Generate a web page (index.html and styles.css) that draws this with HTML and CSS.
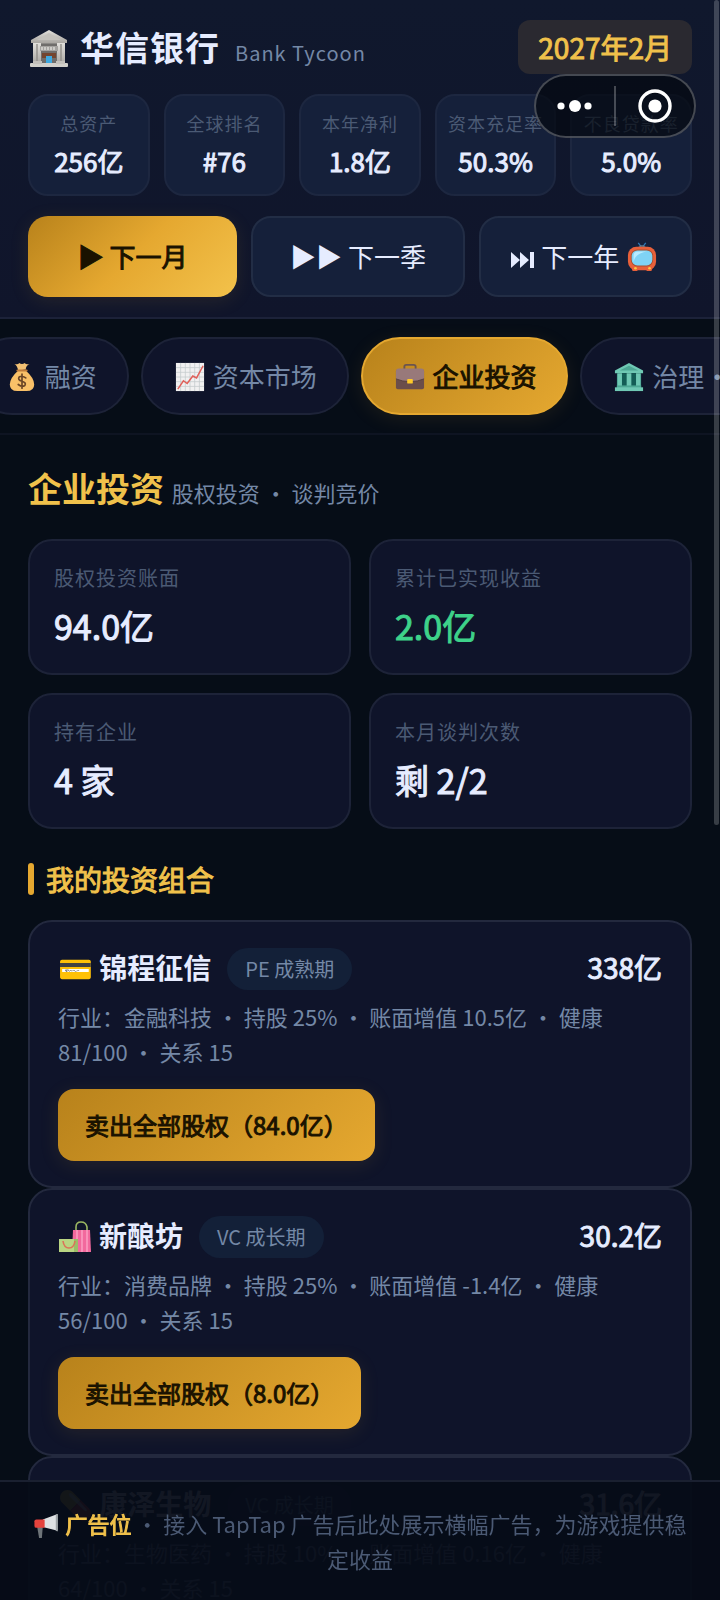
FILE: index.html
```
<!DOCTYPE html>
<html lang="zh-CN">
  <head>
    <meta charset="UTF-8" />
    <meta name="viewport" content="width=device-width, initial-scale=1.0" />
    <title>华信银行 Bank Tycoon</title>
    <link rel="stylesheet" href="styles.css">
  </head>
  <body>
    <header class="header">
      <div class="brand-row">
        <svg class="brand-icon" viewBox="0 0 40 40">
          <defs>
            <linearGradient id="stone" x1="0" y1="0" x2="0" y2="1">
              <stop offset="0" stop-color="#e2e0dc" /><stop offset="1" stop-color="#a9a6a1" />
            </linearGradient>
          </defs>
          <rect x="5" y="13" width="30" height="22" fill="#8b8986" />
          <rect x="12" y="15" width="16" height="20" fill="#6f6d6b" />
          <path d="M20 1 38 11v3H2v-3z" fill="url(#stone)" />
          <path d="M20 4 32 11H8z" fill="#c4c1bc" />
          <rect x="4" y="14" width="8" height="21" fill="url(#stone)" />
          <rect x="28" y="14" width="8" height="21" fill="url(#stone)" />
          <path d="M8 15v19M32 15v19" stroke="#918e89" stroke-width="1.4" />
          <rect x="11" y="17" width="18" height="5" fill="#a5a3a0" />
          <path d="M13 18v3M16 18v3M19 18v3M22 18v3M25 18v3" stroke="#dedcd8" stroke-width="1.4" />
          <rect x="13" y="24" width="14" height="5" fill="#74452f" />
          <rect x="17" y="27" width="6" height="8" fill="#3fa9e0" />
          <rect x="1" y="34" width="38" height="4" rx="1" fill="#d2d0cb" />
          <rect x="4" y="32" width="9" height="3" fill="#c4c1bc" /><rect x="27" y="32" width="9" height="3" fill="#c4c1bc" />
        </svg>
        <h1 class="brand">华信银行</h1>
        <span class="brand-sub">Bank Tycoon</span>
        <span class="date">2027年2月</span>
      </div>
      <div class="stats">
        <div class="stat"><span class="stat-label">总资产</span><span class="stat-value">256亿</span></div>
        <div class="stat"><span class="stat-label">全球排名</span><span class="stat-value">#76</span></div>
        <div class="stat"><span class="stat-label">本年净利</span><span class="stat-value">1.8亿</span></div>
        <div class="stat"><span class="stat-label">资本充足率</span><span class="stat-value">50.3%</span></div>
        <div class="stat"><span class="stat-label">不良贷款率</span><span class="stat-value">5.0%</span></div>
      </div>
      <div class="actions">
        <button class="action action-primary" type="button">▶ 下一月</button>
        <button class="action" type="button">▶▶ 下一季</button>
        <button class="action" type="button">
          <svg class="skip-icon" viewBox="0 0 24 18" fill="currentColor"><path d="M0 1l9 8-9 8zM9 1l9 8-9 8zM19 1h4v16h-4z" /></svg>
          下一年
          <svg class="icon" viewBox="0 0 32 32">
            <path d="M12 1l3 4M20 1l-3 4" stroke="#2f78b5" stroke-width="1.4" />
            <path d="M12 5q4-3 8 0z" fill="#6a7f8c" />
            <path d="M4 26h8l-1 5H6zM20 26h8l-2 5h-5z" fill="#e8603a" />
            <rect x="1" y="5" width="30" height="25" rx="9" fill="#e8603a" />
            <rect x="4" y="8" width="24" height="18" rx="7" fill="#a9512f" />
            <rect x="5" y="9" width="22" height="16" rx="6" fill="#7fd3f5" />
            <path d="M7 21V14q0-4 5-4h9q-12 2-14 11z" fill="#b8ecff" />
            <circle cx="9" cy="28" r="1.4" fill="#ffc640" /><circle cx="24" cy="28" r="1.4" fill="#ffc640" />
          </svg>
        </button>
      </div>
    </header>

    <nav class="tabs">
      <button class="tab" type="button">
        <svg class="icon" viewBox="0 0 32 32">
          <path d="M12 9Q11 4 8 2q4 1 5-1 3 2 6 0 1 2 5 1-4 2-4 6z" fill="#f3c173" />
          <path d="M12 9h8q9 8 9 15 0 7-8 7H11q-8 0-8-7 0-7 9-15z" fill="#f9c068" />
          <path d="M11 9h10" stroke="#c07c3a" stroke-width="2" stroke-linecap="round" />
          <path d="M20 17q-4-3-7-1-2 3 3 4.500 5 1.500 3 4.500-3 2-7-1M16 13v15" fill="none" stroke="#6b4526" stroke-width="1.8" stroke-linecap="round" />
        </svg>
        融资
      </button>
      <button class="tab" type="button">
        <svg class="icon" viewBox="0 0 32 32">
          <rect x="1" y="1" width="30" height="30" fill="#f1f1f1" />
          <path d="M6 1v30M11 1v30M16 1v30M21 1v30M26 1v30M1 6h30M1 11h30M1 16h30M1 21h30M1 26h30" stroke="#c3c9cb" stroke-width=".8" />
          <path d="M3 29l6-9 4 3 6-8 4 2 7-13" fill="none" stroke="#e0605a" stroke-width="1.6" />
        </svg>
        资本市场
      </button>
      <button class="tab active" type="button">
        <svg class="icon" viewBox="0 0 32 32">
          <path d="M10 8V5q0-2 2-2h8q2 0 2 2v3" fill="none" stroke="#6b5450" stroke-width="2" />
          <rect x="1" y="8" width="30" height="21" rx="2" fill="#6b4e4a" />
          <path d="M1 18V10q0-3 3-3h24q3 0 3 3v8q-7 3-15 3t-15-3z" fill="#98797a" />
          <path d="M1 18q7 3 15 3t15-3" fill="none" stroke="#55403d" />
          <rect x="13" y="18" width="6" height="5" rx="1" fill="#ffc928" />
        </svg>
        企业投资
      </button>
      <button class="tab" type="button">
        <svg class="icon" viewBox="0 0 32 32">
          <path d="M16 1 31 9v3H1V9z" fill="#6fc9b4" />
          <path d="M16 4 26 9H6z" fill="#4da894" />
          <rect x="3" y="12" width="26" height="15" fill="#145e56" />
          <path d="M6 12v15M16 12v15M26 12v15" stroke="#6fc9b4" stroke-width="5" />
          <rect x="3" y="25" width="26" height="3" fill="#4da894" />
          <rect x="1" y="27" width="30" height="4" fill="#6fc9b4" />
        </svg>
        治理·
      </button>
    </nav>

    <main class="content">
      <h2 class="page-title">企业投资 <small>股权投资 ・ 谈判竞价</small></h2>
      <div class="cards">
        <div class="card"><div class="card-label">股权投资账面</div><div class="card-value">94.0亿</div></div>
        <div class="card"><div class="card-label">累计已实现收益</div><div class="card-value green">2.0亿</div></div>
        <div class="card"><div class="card-label">持有企业</div><div class="card-value">4 家</div></div>
        <div class="card"><div class="card-label">本月谈判次数</div><div class="card-value">剩 2/2</div></div>
      </div>

      <h3 class="section-title">我的投资组合</h3>
      <article class="holding">
        <div class="holding-head">
          <h4>💳 锦程征信</h4>
          <span class="tag">PE 成熟期</span>
          <strong class="worth">338亿</strong>
        </div>
        <p>行业：金融科技 ・ 持股 25% ・ 账面增值 10.5亿 ・ 健康 81/100 ・ 关系 15</p>
        <button class="sell" type="button">卖出全部股权（84.0亿）</button>
      </article>
      <article class="holding">
        <div class="holding-head">
          <svg class="bags-icon" viewBox="0 0 32 32">
            <path d="M17 10V6q0-5 5-5t6 5v4" fill="none" stroke="#9cb862" stroke-width="1.6" />
            <path d="M14 9h17l1 22H13z" fill="#f2699d" />
            <path d="M18 9v22M23 9v22M28 9v22" stroke="#fa9cc0" stroke-width="1.6" />
            <rect x="0" y="18" width="19" height="13" fill="#b9d582" />
            <path d="M15 18h4v13h-4z" fill="#9cbc68" />
            <path d="M4 20q1 7 6 7t6-7" fill="none" stroke="#dc7358" stroke-width="1.6" />
          </svg>
          <h4>新酿坊</h4>
          <span class="tag">VC 成长期</span>
          <strong class="worth">30.2亿</strong>
        </div>
        <p>行业：消费品牌 ・ 持股 25% ・ 账面增值 -1.4亿 ・ 健康 56/100 ・ 关系 15</p>
        <button class="sell" type="button">卖出全部股权（8.0亿）</button>
      </article>
      <article class="holding">
        <div class="holding-head">
          <h4>💊 康泽生物</h4>
          <span class="tag">VC 成长期</span>
          <strong class="worth">31.6亿</strong>
        </div>
        <p>行业：生物医药 ・ 持股 10% ・ 账面增值 0.16亿 ・ 健康 64/100 ・ 关系 15</p>
      </article>
    </main>

    <footer class="ad-bar">
      <svg class="ad-icon" viewBox="0 0 28 28">
        <path d="M4 15h6l-1 12H6z" fill="#6d7478" />
        <path d="M10 7 26 1v18l-16-4z" fill="#dfe2e4" />
        <path d="M24 2v17l2 1V1z" fill="#9da3a6" />
        <path d="M3 7h9v9H3q-2 0-2-2V9q0-2 2-2z" fill="#e5433d" />
      </svg>
      <strong>广告位</strong> ・ 接入 TapTap 广告后此处展示横幅广告，为游戏提供稳定收益
    </footer>

    <div class="capsule">
      <button type="button" aria-label="菜单">
        <svg width="36" height="14" viewBox="0 0 36 14" fill="#fff">
          <circle cx="4" cy="7" r="3.6" /><circle cx="18" cy="7" r="6" /><circle cx="31" cy="7" r="3.6" />
        </svg>
      </button>
      <span class="capsule-line"></span>
      <button type="button" aria-label="关闭">
        <svg width="34" height="34" viewBox="0 0 34 34">
          <circle cx="17" cy="17" r="15" fill="none" stroke="#fff" stroke-width="3.4" />
          <circle cx="17" cy="17" r="6.6" fill="#fff" />
        </svg>
      </button>
    </div>
    <div class="scroll-thumb"></div>

    <script>
      document.querySelector(".tabs").scrollLeft = 55;
    </script>
  </body>
</html>
```

FILE: styles.css
```
* {
  margin: 0;
  padding: 0;
  box-sizing: border-box;
}
body {
  background: #060d17;
  color: #e6ecff;
  font-family: "Noto Sans CJK SC", "Noto Color Emoji", sans-serif;
  height: 100vh;
  overflow: hidden;
}
button {
  font-family: inherit;
  border: none;
  cursor: pointer;
}
.header {
  padding: 20px 28px;
  background: linear-gradient(180deg, #10182d, #10152b);
  border-bottom: 2px solid #1c2239;
}
.brand-row {
  display: flex;
  align-items: center;
  height: 54px;
}
.brand-icon {
  width: 42px;
  height: 40px;
  margin: 4px 10px 0 0;
}
.brand {
  padding-bottom: 2px;
  font-size: 34px;
  letter-spacing: 1px;
  font-weight: 700;
}
.brand-sub {
  margin-left: 15px;
  padding-top: 10px;
  font-size: 20px;
  letter-spacing: 1px;
  color: #7488a6;
}
.date,
.stat-value,
.action-primary,
.tab.active,
.card-value,
.section-title,
.worth,
.sell,
.ad-bar strong {
  font-weight: 400;
  -webkit-text-stroke: 1px currentColor;
}
.date {
  margin-left: auto;
  padding: 0 20px;
  line-height: 54px;
  border-radius: 12px;
  background: #2a2930;
  color: #f0c14b;
  font-size: 28px;
}
.stats {
  display: grid;
  grid-template-columns: repeat(5, 1fr);
  gap: 14px;
  margin: 20px 0;
}
.stat {
  display: flex;
  flex-direction: column;
  align-items: center;
  padding: 13px 0;
  border: 2px solid #1d2740;
  border-radius: 20px;
  background: #15203a;
  white-space: nowrap;
}
.stat-label {
  font-size: 18px;
  line-height: 28px;
  letter-spacing: 1px;
  color: #4b5a74;
}
.stat-value {
  margin-top: 4px;
  font-size: 26px;
  line-height: 40px;
}
.actions {
  display: flex;
  gap: 14px;
}
.action {
  flex: 1;
  min-height: 81px;
  padding-bottom: 2px;
  border: 2px solid #222d45;
  border-radius: 20px;
  background: #15203a;
  color: #e6ecff;
  font-size: 26px;
  white-space: nowrap;
}
.action-primary {
  border: none;
  background: linear-gradient(135deg, #b8821b, #e5a830 50%, #f3c24b);
  box-shadow: 0 4px 20px rgba(229, 168, 48, 0.1);
  color: #1a1200;
}
.icon {
  width: 34px;
  height: 30px;
  vertical-align: -5px;
}
.skip-icon {
  width: 24px;
  height: 18px;
  vertical-align: -2px;
}
.tabs {
  display: flex;
  gap: 12px;
  padding: 18px 28px;
  overflow-x: auto;
  scrollbar-width: none;
  border-bottom: 2px solid #0e1422;
}
.tab {
  flex: none;
  height: 78px;
  padding: 0 30px 2px;
  border: 2px solid #1d2338;
  border-radius: 39px;
  background: #0f142a;
  color: #7488a6;
  font-size: 26px;
  white-space: nowrap;
}
.tab.active {
  border-color: #e5a830;
  background: linear-gradient(135deg, #b8821b, #e5a830);
  box-shadow: 0 4px 20px rgba(229, 168, 48, 0.1);
  color: #1a1200;
}
.content {
  padding: 28px 28px 0;
}
.page-title {
  font-size: 34px;
  line-height: 50px;
  color: #f0c14b;
}
.page-title small {
  font-size: 22px;
  font-weight: 400;
  color: #7488a6;
}
.cards {
  display: grid;
  grid-template-columns: 1fr 1fr;
  gap: 18px;
  margin: 22px 0 30px;
}
.card {
  padding: 22px 24px;
  border: 2px solid #1d2338;
  border-radius: 24px;
  background: #0f142a;
}
.card-label {
  font-size: 20px;
  line-height: 30px;
  letter-spacing: 1px;
  color: #4b5a74;
}
.card-value {
  margin-top: 8px;
  font-size: 34px;
  line-height: 50px;
}
.green {
  color: #3ed28a;
}
.section-title {
  display: flex;
  align-items: center;
  gap: 12px;
  margin-bottom: 21px;
  font-size: 28px;
  line-height: 40px;
  color: #f0c14b;
}
.section-title::before {
  content: "";
  width: 6px;
  height: 32px;
  border-radius: 3px;
  background: #e5a830;
}
.holding {
  padding: 26px 28px 25px;
  border: 2px solid #23293e;
  border-radius: 24px;
  background: #0f142a;
}
.holding-head {
  display: flex;
  height: 42px;
}
.holding-head h4,
.worth {
  font-size: 28px;
  line-height: 38px;
}
.bags-icon {
  width: 32px;
  height: 32px;
  margin: 5px 8px 0 1px;
}
.tag {
  margin-left: 16px;
  padding: 0 18px;
  line-height: 42px;
  border-radius: 21px;
  background: #132038;
  color: #7488a6;
  font-size: 20px;
}
.worth {
  margin-left: auto;
}
.holding p {
  margin: 9px 0 20px;
  color: #7488a6;
  font-size: 22px;
  line-height: 35px;
}
.sell {
  height: 72px;
  padding: 0 27px 2px;
  border-radius: 16px;
  background: linear-gradient(135deg, #b8821b, #e5a830);
  box-shadow: 0 4px 20px rgba(229, 168, 48, 0.1);
  color: #1a1200;
  font-size: 24px;
}
.ad-bar {
  position: fixed;
  left: 0;
  right: 0;
  bottom: 0;
  padding: 24px 28px;
  border-top: 2px solid #1a2030;
  background: rgba(6, 12, 23, 0.95);
  color: #4b5a74;
  font-size: 22px;
  line-height: 35px;
  text-align: center;
}
.ad-bar strong {
  color: #f0c14b;
}
.ad-icon {
  width: 27px;
  height: 26px;
  vertical-align: -6px;
}
.capsule {
  position: fixed;
  top: 74px;
  right: 24px;
  display: flex;
  align-items: center;
  width: 162px;
  height: 64px;
  border: 2px solid rgba(255, 255, 255, 0.25);
  border-radius: 32px;
  background: rgba(4, 8, 16, 0.7);
}
.capsule button {
  flex: 1;
  display: flex;
  align-items: center;
  justify-content: center;
  background: none;
}
.capsule-line {
  width: 2px;
  height: 40px;
  background: rgba(255, 255, 255, 0.25);
}
.scroll-thumb {
  position: fixed;
  top: 0;
  right: 1px;
  width: 5px;
  height: 825px;
  border-radius: 3px;
  background: rgba(255, 255, 255, 0.2);
}
```
